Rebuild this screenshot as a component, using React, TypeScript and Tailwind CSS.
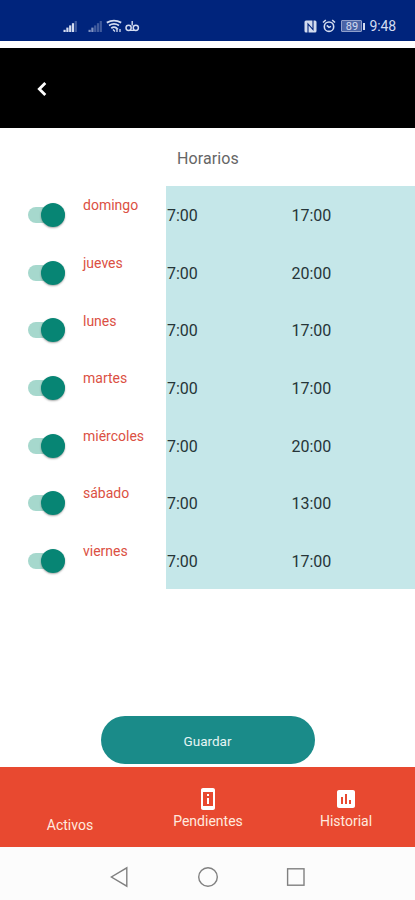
import { ReactNode, useState } from "react"
import { MdAssessment, MdPermDeviceInformation } from "react-icons/md"

type Schedule = {
  day: string
  from: string
  to: string
}

const schedules: Schedule[] = [
  { day: "domingo", from: "7:00", to: "17:00" },
  { day: "jueves", from: "7:00", to: "20:00" },
  { day: "lunes", from: "7:00", to: "17:00" },
  { day: "martes", from: "7:00", to: "17:00" },
  { day: "miércoles", from: "7:00", to: "20:00" },
  { day: "sábado", from: "7:00", to: "13:00" },
  { day: "viernes", from: "7:00", to: "17:00" },
]

const App = () => {
  return (
    <div className="flex h-[900px] w-[415px] flex-col overflow-hidden bg-white font-['Roboto',sans-serif]">
      <StatusBar />
      <header className="mt-[7px] flex h-20 shrink-0 items-center bg-black pt-0.5 pl-[37px]">
        <button type="button" aria-label="Volver">
          <svg
            viewBox="0 0 10 14"
            fill="none"
            className="h-3.5 w-2.5 stroke-white"
          >
            <path d="M8.3 1L2.3 7l6 6" strokeWidth="2.8" />
          </svg>
        </button>
      </header>

      <main className="flex grow flex-col items-center">
        <h1 className="flex h-[58px] items-center pt-1 pl-px text-base tracking-[0.1px] text-[#666666]">
          Horarios
        </h1>
        <div className="w-full">
          {schedules.map((schedule) => (
            <ScheduleRow key={schedule.day} {...schedule} />
          ))}
        </div>
        <button
          type="button"
          className="mt-auto mb-[3px] h-12 w-[214px] rounded-full bg-[#1a8b89] pt-0.5 text-[13.5px] text-[#e6f5f4]"
        >
          Guardar
        </button>
      </main>

      <nav className="grid h-20 shrink-0 grid-cols-3 bg-[#e84930] pl-px text-[#ffe9df]">
        <Tab label="Activos" />
        <Tab
          label="Pendientes"
          icon={<MdPermDeviceInformation className="size-6" />}
        />
        <Tab label="Historial" icon={<MdAssessment className="size-6" />} />
      </nav>
      <SystemBar />
    </div>
  )
}

const StatusBar = () => {
  return (
    <div className="flex h-[41px] shrink-0 items-end justify-between bg-[#00247c] pr-[19px] pb-[7px] pl-[63px] text-[#d3dcf0]">
      <div className="flex h-4 items-center">
        <SignalIcon strength={4} />
        <span className="w-[11px]" />
        <SignalIcon strength={2} />
        <svg
          viewBox="0 0 17 14"
          fill="none"
          className="ml-1 h-3.5 w-[17px] stroke-current"
        >
          <path
            strokeWidth="1.8"
            d="M.8 3.6Q8 -.2 15.2 3.6M3 6.4Q8 3.4 13 6.4M5.3 9.2Q8 7 10.7 9.2"
          />
          <path strokeWidth="1.3" d="M7 10.5l2 2M11 9v4M14 13v-3M10 10.3l1-1 1 1" />
        </svg>
        <svg
          viewBox="0 0 15 14"
          fill="none"
          className="ml-0.5 h-3.5 w-[15px] stroke-current"
        >
          <circle cx="3.6" cy="8.8" r="2.6" strokeWidth="1.5" />
          <circle cx="10.8" cy="8.8" r="2.6" strokeWidth="1.5" />
          <path strokeWidth="1.4" d="M7.2 2v4.5M5 11.4h4.4" />
        </svg>
      </div>

      <div className="flex h-4 items-center">
        <svg viewBox="0 0 13 13" fill="none" className="size-[13px]">
          <rect
            x="0.5"
            y="0.5"
            width="12"
            height="12"
            rx="1.5"
            className="fill-current"
          />
          <path
            className="stroke-[#00247c]"
            strokeWidth="1.1"
            d="M4 13V4l5 5.5V0"
          />
        </svg>
        <svg
          viewBox="0 0 14 14"
          fill="none"
          className="ml-[5px] size-3.5 stroke-current"
        >
          <circle cx="7" cy="7.7" r="4.7" strokeWidth="1.6" />
          <path strokeWidth="1.6" d="M1 3.5L3.8 1M13 3.5L10.2 1M4.8 6.3L7 8.4l2-1" />
        </svg>
        <div className="ml-[5px] flex h-3 w-[21px] items-center justify-center rounded-[1px] border border-[#8f9fcb] bg-[#4a64a6] text-[11px] leading-none">
          89
        </div>
        <span className="ml-px h-[7px] w-0.5 bg-current" />
        <span className="ml-1 text-sm leading-4 tracking-[-0.1px]">9:48</span>
      </div>
    </div>
  )
}

const SignalIcon = ({ strength }: { strength: number }) => {
  return (
    <svg viewBox="0 0 14 12" className="h-3 w-3.5 fill-current">
      {[0, 1, 2, 3, 4].map((bar) => (
        <rect
          key={bar}
          x={0.5 + bar * 2.8}
          y={9.8 - bar * 2.2}
          width="2.2"
          height={2.2 + bar * 2.2}
          opacity={bar < strength ? (strength > 2 ? 1 : 0.6) : 0.3}
        />
      ))}
    </svg>
  )
}

const ScheduleRow = ({ day, from, to }: Schedule) => {
  return (
    <div className="flex h-[57.6px]">
      <div className="flex w-[83px] items-center pt-px pl-7">
        <Toggle label={day} />
      </div>
      <div className="w-[83px] pt-[9.4px] text-sm leading-5 text-[#db5043]">
        {day}
      </div>
      <div className="grid grow grid-cols-2 items-center bg-[#c5e7e9] text-base text-[#263538]">
        <span className="pt-[2.8px] pl-px">{from}</span>
        <span className="pt-[2.8px] pl-px">{to}</span>
      </div>
    </div>
  )
}

const Toggle = ({ label }: { label: string }) => {
  const [enabled, setEnabled] = useState(true)

  return (
    <button
      type="button"
      role="switch"
      aria-checked={enabled}
      aria-label={label}
      onClick={() => setEnabled(!enabled)}
      className={`flex h-4 w-[37px] items-center rounded-full bg-[#a6d8cd] ${
        enabled ? "justify-end" : "justify-start"
      }`}
    >
      <span className="size-6 shrink-0 rounded-full bg-[#078574] shadow-[0_1px_2px_rgba(0,0,0,0.35)]" />
    </button>
  )
}

const Tab = ({ label, icon }: { label: string; icon?: ReactNode }) => {
  return (
    <a
      className={`flex flex-col items-center text-sm leading-5 ${
        icon ? "pt-5" : "pt-12"
      }`}
    >
      {icon && <span className="text-white">{icon}</span>}
      {label}
    </a>
  )
}

const SystemBar = () => {
  return (
    <div className="flex h-[53px] shrink-0 items-center justify-center gap-[67px] bg-[#fcfcfc] pt-1.5">
      <svg viewBox="0 0 20 22" fill="none" className="h-[22px] w-5 stroke-[#808080]">
        <path strokeWidth="1.4" d="M16.8 1.8v18.4L1.4 11z" />
      </svg>
      <svg viewBox="0 0 22 22" fill="none" className="size-[22px] stroke-[#808080]">
        <circle cx="11" cy="11" r="9.3" strokeWidth="1.4" />
      </svg>
      <svg viewBox="0 0 20 20" fill="none" className="size-5 stroke-[#808080]">
        <rect x="1.6" y="1.8" width="16.4" height="16.4" strokeWidth="1.4" />
      </svg>
    </div>
  )
}

export default App
